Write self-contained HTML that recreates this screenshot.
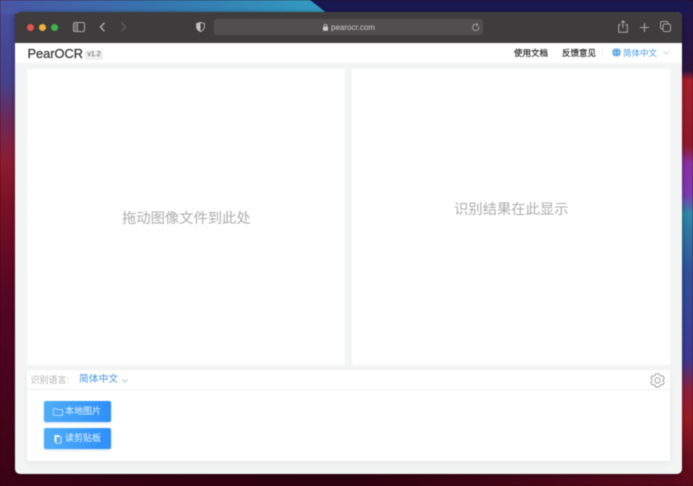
<!DOCTYPE html>
<html lang="zh"><head><meta charset="utf-8"><title>PearOCR</title>
<style>
*{box-sizing:border-box;margin:0;padding:0}
html,body{width:693px;height:486px;overflow:hidden;background:#300}
body{position:relative;font-family:"Liberation Sans","Noto Sans CJK SC",sans-serif}
#all{position:absolute;left:0;top:0;width:693px;height:486px;overflow:hidden;filter:blur(.4px)}
.a{position:absolute;white-space:nowrap}
#bg{position:absolute;left:0;top:0}
#win{position:absolute;left:15px;top:12px;width:667px;height:462px;border-radius:5px;overflow:hidden;background:#f3f4f4;box-shadow:0 1px 6px rgba(0,0,0,.4)}
#tb{position:absolute;left:0;top:0;width:667px;height:30.5px;background:#3e3c3d}
#hd{position:absolute;left:0;top:30.5px;width:667px;height:20px;background:#fff}
.p{position:absolute;background:#fff}
.hint{color:#aeaeae;font-size:14.4px;letter-spacing:-.1px}
.dot{position:absolute;width:7px;height:7px;border-radius:50%;top:23.5px}
.btn{position:absolute;left:44px;width:66.5px;height:21px;border-radius:2px;background:linear-gradient(90deg,#4fadf6,#2e8ffa);color:#eaf4ff;font-size:9px;line-height:21px;box-shadow:0 1px 2px rgba(60,140,240,.3)}
svg{position:absolute;overflow:visible}
</style></head><body><div id="all">
<svg id="bg" width="693" height="486" viewBox="0 0 693 486">
<defs>
<linearGradient id="l" x1="0" y1="0" x2="0" y2="1"><stop offset="0" stop-color="#46519f"/><stop offset=".17" stop-color="#46418c"/><stop offset=".24" stop-color="#6a2a5c"/><stop offset=".33" stop-color="#8c1d33"/><stop offset=".42" stop-color="#7a1027"/><stop offset=".6" stop-color="#560623"/><stop offset="1" stop-color="#3a0316"/></linearGradient>
<linearGradient id="t" x1="0" y1="0" x2="1" y2="0"><stop offset="0" stop-color="#4a55a5"/><stop offset=".5" stop-color="#3578b0"/><stop offset="1" stop-color="#32a0c4"/></linearGradient>
<linearGradient id="r" x1="0" y1="0" x2="0" y2="1"><stop offset="0" stop-color="#1b1850"/><stop offset=".145" stop-color="#2a1540"/><stop offset=".165" stop-color="#a81f2c"/><stop offset=".3" stop-color="#8e1a2c"/><stop offset=".335" stop-color="#8a30a0"/><stop offset=".4" stop-color="#7d3ab0"/><stop offset=".44" stop-color="#2e88a8"/><stop offset=".56" stop-color="#30509a"/><stop offset=".74" stop-color="#3c3a90"/><stop offset=".8" stop-color="#8a2040"/><stop offset=".86" stop-color="#9a1a24"/><stop offset=".94" stop-color="#6a0e1e"/><stop offset="1" stop-color="#5a0a1c"/></linearGradient>
<linearGradient id="b" x1="0" y1="0" x2="1" y2="0"><stop offset="0" stop-color="#3a0316"/><stop offset=".5" stop-color="#2c0210"/><stop offset="1" stop-color="#5a0a1c"/></linearGradient>
</defs>
<rect width="693" height="486" fill="url(#b)"/>
<rect x="0" y="0" width="15" height="486" fill="url(#l)"/>
<rect x="682" y="0" width="11" height="486" fill="url(#r)"/>
<rect x="0" y="0" width="340" height="14" fill="url(#t)"/>
<polygon points="310,0 693,0 693,14 328,14" fill="#1a1850"/>
</svg>
<div id="win">
<div id="tb"></div><div id="hd"></div>
<div class="p" style="left:12px;top:57px;width:318px;height:296px"></div>
<div class="p" style="left:337px;top:57px;width:318px;height:296px"></div>
<div class="p" style="left:12px;top:358px;width:643px;height:91px;box-shadow:0 2px 6px rgba(0,0,0,.05)"></div>
<div class="a" style="left:12px;top:377px;width:643px;height:1px;background:#eeeeee"></div>
</div>

<div class="dot" style="left:27px;background:#e5534f"></div>
<div class="dot" style="left:39px;background:#ecb13a"></div>
<div class="dot" style="left:51px;background:#3cb54a"></div>

<svg style="left:73px;top:22px" width="12" height="10" fill="none" stroke="#a8a6a6" stroke-width="1"><rect x=".5" y=".5" width="11" height="9" rx="1.5"/><rect x="1.2" y="1.2" width="3.2" height="7.6" fill="#6e6c6c" stroke="none"/><path d="M4.6 1v8" stroke-width=".8"/></svg>
<svg style="left:99px;top:22px" width="7" height="10" fill="none" stroke="#b5b3b3" stroke-width="1.3"><path d="M5.5 .8 1.4 5l4.1 4.2"/></svg>
<svg style="left:120px;top:22px" width="7" height="10" fill="none" stroke="#626060" stroke-width="1.3"><path d="M1.5 .8 5.6 5 1.5 9.2"/></svg>
<svg style="left:196px;top:22px" width="9" height="10"><path d="M4.5 .4 8.4 1.6v3c0 2.5-1.7 4-3.9 5C2.3 8.6.6 7.1.6 4.6v-3z" fill="#3e3c3d" stroke="#bdbbbb" stroke-width=".9"/><path d="M4.5.4.6 1.6v3c0 2.5 1.7 4 3.900 5z" fill="#c4c2c2"/></svg>

<div class="a" style="left:214px;top:19px;width:269px;height:16px;border-radius:3px;background:#504e4f"></div>
<svg style="left:323px;top:24px" width="5" height="7"><rect x="0" y="2.7" width="5" height="4" rx=".7" fill="#cfcdcd"/><path d="M1.1 3V1.8a1.400 1.400 0 0 1 2.800 0V3" fill="none" stroke="#cfcdcd" stroke-width=".8"/></svg>
<div class="a" style="left:331px;top:22px;font-size:8px;line-height:11px;color:#cfcdcd">pearocr.com</div>
<svg style="left:472px;top:23px" width="8" height="9" fill="none" stroke="#a9a7a7" stroke-width=".9"><path d="M6.8 3.4a3.200 3.200 0 1 1-1.300-1.700"/><path d="M4.4.4 5.8 1.7 4.500 3"/></svg>
<svg style="left:618px;top:20px" width="10" height="13" fill="none" stroke="#a9a7a7" stroke-width="1"><path d="M2.8 4.700H.7v7.600h8.600V4.700H7.200M5 8V.8M3 2.700 5 .8l2 1.900"/></svg>
<svg style="left:640px;top:23px" width="9" height="9" stroke="#a9a7a7" stroke-width="1.100"><path d="M4.500 0v9M0 4.500h9"/></svg>
<svg style="left:660px;top:21px" width="11" height="11" fill="none" stroke="#a9a7a7" stroke-width="1"><rect x=".5" y=".5" width="7.500" height="7.500" rx="1.800"/><rect x="3" y="3" width="7.500" height="7.500" rx="1.800" fill="#3e3c3d"/></svg>

<div class="a" style="left:27.5px;top:45px;font-size:12.8px;line-height:17px;color:#333;-webkit-text-stroke:.25px #333">PearOCR</div>
<div class="a" style="left:85px;top:50px;width:18px;height:10px;border-radius:2px;background:#efefef;font-size:7px;line-height:10px;text-align:center;color:#555">v1.2</div>
<div class="a" style="left:514px;top:46.500px;font-size:8.500px;line-height:12px;color:#222;-webkit-text-stroke:.15px #222">使用文档</div>
<div class="a" style="left:562px;top:46.500px;font-size:8.500px;line-height:12px;color:#222;-webkit-text-stroke:.15px #222">反馈意见</div>
<div class="a" style="left:602px;top:47px;width:1px;height:11px;background:#f0f0f0"></div>
<svg style="left:612px;top:47.500px" width="9" height="9" fill="none" stroke="#cfe3f7" stroke-width=".7"><circle cx="4.500" cy="4.500" r="4.200" fill="#4a97e2" stroke="none"/><ellipse cx="4.500" cy="4.500" rx="1.800" ry="4"/><path d="M.5 4.500h8"/></svg>
<div class="a" style="left:623px;top:46.500px;font-size:8.500px;line-height:12px;color:#4a9be4">简体中文</div>
<svg style="left:663px;top:50.500px" width="6" height="4" fill="none" stroke="#c6c6c6" stroke-width=".8"><path d="M.4.600 3 3 5.600.600"/></svg>

<div class="a hint" style="left:122px;top:210px;line-height:18px">拖动图像文件到此处</div>
<div class="a hint" style="left:454px;top:200.500px;line-height:18px">识别结果在此显示</div>

<div class="a" style="left:30.500px;top:374px;font-size:9px;line-height:13px;color:#b2b2b2">识别语言:</div>
<div class="a" style="left:79px;top:373px;font-size:9.800px;line-height:14px;color:#4a94dc">简体中文</div>
<svg style="left:122px;top:379px" width="6" height="4" fill="none" stroke="#b8b8b8" stroke-width=".8"><path d="M.4.600 3 3 5.600.600"/></svg>
<svg style="left:651px;top:372.500px" width="13" height="14" fill="none" stroke="#9a9a9a" stroke-width=".9"><path d="M4.800.8h3.400l.7 1.500 1.600.9 1.500-.2 1.200 2.300-1 1.200v1.800l1 1.200-1.200 2.300-1.500-.2-1.600.9-.7 1.500H4.800l-.7-1.500-1.600-.9-1.500.2L-.2 9.500l1-1.200V6.500l-1-1.200L1 3l1.500.2 1.600-.9z"/><circle cx="6.500" cy="7.400" r="2.700"/></svg>

<div class="btn" style="top:401px"><span class="a" style="left:21px;top:0">本地图片</span></div>
<svg style="left:53px;top:407.500px" width="10" height="8" fill="none" stroke="#d3e8fd" stroke-width=".7"><path d="M.4 7.400V.6h3.200l.8 1h5.200v5.800z"/></svg>
<div class="btn" style="top:428px"><span class="a" style="left:21px;top:0">读剪贴板</span></div>
<svg style="left:54px;top:433.500px" width="8" height="10"><path d="M.4 1h5.200v1.500H7.600V9.600H1.800V8H.4z" fill="#eaf4ff"/><path d="M2.500 3h4.300v6H2.500z" fill="#5aa8f4"/></svg>
</div></body></html>
